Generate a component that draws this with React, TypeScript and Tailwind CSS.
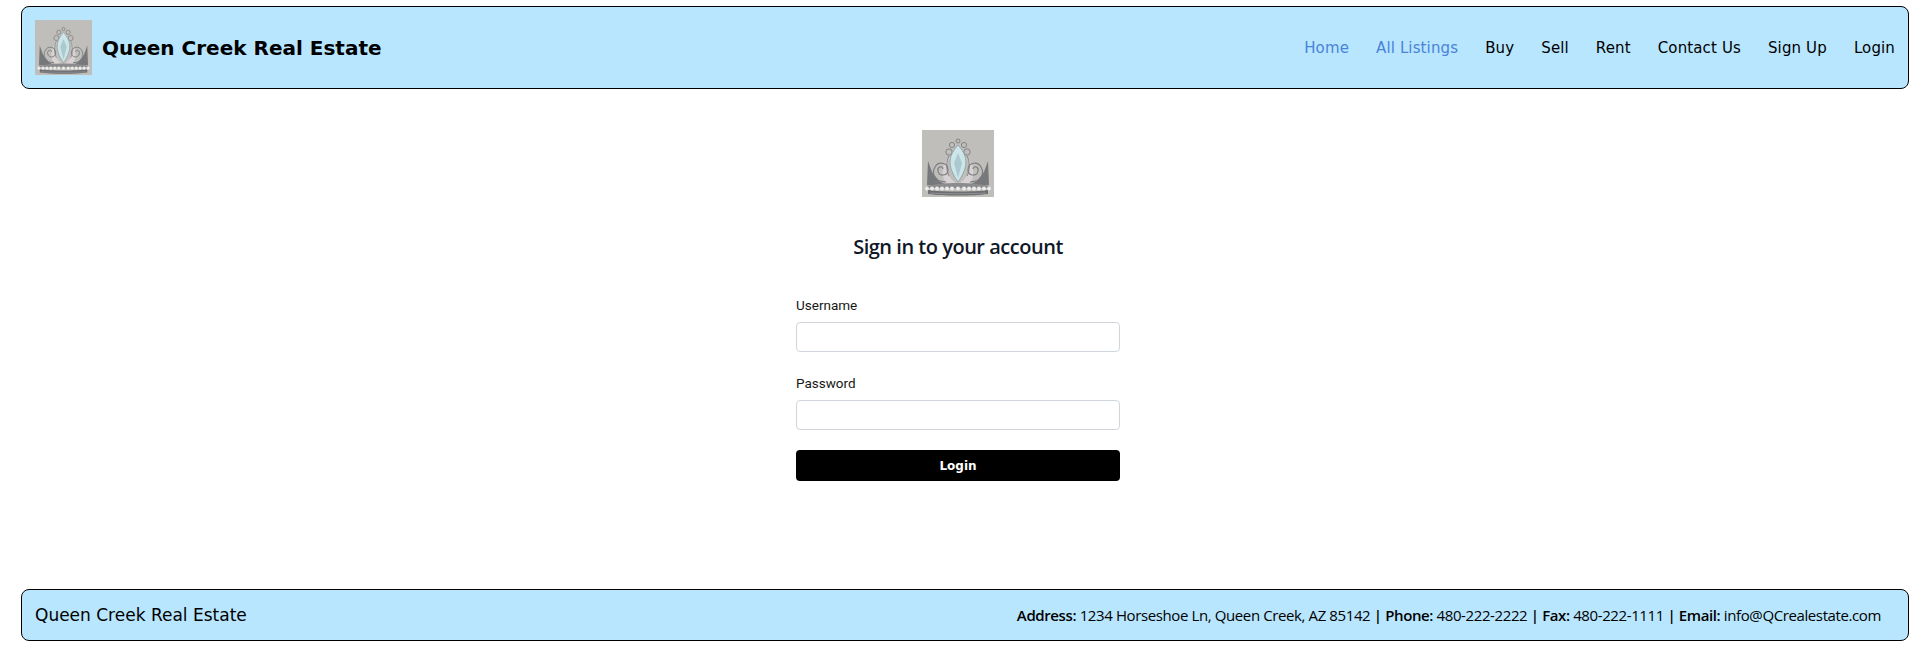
const navLinks = [
  { label: "Home", active: true },
  { label: "All Listings", active: true },
  { label: "Buy" },
  { label: "Sell" },
  { label: "Rent" },
  { label: "Contact Us" },
  { label: "Sign Up" },
  { label: "Login" },
]

const pearls = [5, 10, 15, 20, 25, 30, 36, 42, 47, 52, 57, 62, 67]

const Crown = ({ className }: { className: string }) => (
  <svg viewBox="0 0 72 67" preserveAspectRatio="none" className={className}>
    <rect width="72" height="67" fill="#bfbeba" />
    {/* side wings */}
    <path d="M6 31L10 42L17 51L24 55H5Z" fill="#77787b" />
    <path d="M66 31L62 42L55 51L48 55H67Z" fill="#77787b" />
    {/* pink lining */}
    <path d="M30 25C22 33 23 46 35 54L24 53C18 45 20 32 30 25Z" fill="#d8d2d4" />
    <path d="M42 25C50 33 49 46 37 54L48 53C54 45 52 32 42 25Z" fill="#d8d2d4" />
    {/* filigree */}
    <g fill="none" stroke="#7d7e81" strokeWidth="0.9">
      <circle cx="27" cy="22" r="3.2" />
      <circle cx="45" cy="22" r="3.2" />
      <circle cx="30" cy="15" r="2.6" />
      <circle cx="42" cy="15" r="2.6" />
      <circle cx="36" cy="11" r="2" />
      <path d="M24 52C13 52 9 44 13 37C16 31 26 32 26 40C26 46 17 47 16 41C15 37 20 35 21 39" strokeWidth="1.2" />
      <path d="M48 52C59 52 63 44 59 37C56 31 46 32 46 40C46 46 55 47 56 41C57 37 52 35 51 39" strokeWidth="1.2" />
      <path d="M27 26C24 32 24 40 27 46" />
      <path d="M45 26C48 32 48 40 45 46" />
    </g>
    {/* gem */}
    <path d="M36 15C45 25 48 35 36 52C24 35 27 25 36 15Z" fill="#cbe5e8" stroke="#84949a" strokeWidth="0.7" />
    <path d="M36 23L40 33L36 48L32 33Z" fill="#9dbec4" opacity="0.7" />
    {/* band */}
    <path d="M5 56C20 52 52 52 67 56V58H5Z" fill="#8b8c8e" />
    <path d="M6 60C20 62 52 62 66 60V64C50 66 22 66 6 64Z" fill="#6d6e71" />
    <path d="M8 63C22 64 50 64 64 63" fill="none" stroke="#a5a6a8" strokeWidth="0.6" />
    <g fill="#ececec">
      {pearls.map((cx) => (
        <circle key={cx} cx={cx} cy="58.5" r="2" />
      ))}
    </g>
  </svg>
)

export default function App() {
  return (
    <div className="flex flex-col h-[662px] bg-white pt-[6px] pl-[21px] pr-[9px] font-['DejaVu_Sans',sans-serif] text-black">
      <header className="flex justify-between items-center h-[83px] px-[13px] bg-sky-200 border border-black rounded-lg">
        <div className="flex items-center gap-[10px]">
          <Crown className="w-[57px] h-[55px]" />
          <span className="pt-[1px] text-[20px] font-bold">Queen Creek Real Estate</span>
        </div>
        <nav className="flex gap-[27px] pt-[2px] text-[15px] tracking-[0.13px]">
          {navLinks.map((link) => (
            <a key={link.label} href="#" className={link.active ? "text-[#4a83d8]" : ""}>
              {link.label}
            </a>
          ))}
        </nav>
      </header>

      <main className="flex flex-col items-center flex-1 pt-[41px] pr-[14px]">
        <Crown className="w-[72px] h-[67px]" />
        <h2 className="mt-[36px] text-[20px] leading-7 font-semibold tracking-[-0.48px] text-gray-900 font-['Open_Sans',sans-serif]">
          Sign in to your account
        </h2>
        <form className="flex flex-col w-[324px] mt-[34px] font-['Roboto',sans-serif]">
          <label className="text-[13.5px] leading-5 text-neutral-900">Username</label>
          <input className="h-[30px] mt-[7px] bg-white border border-gray-300 rounded-[4px]" />
          <label className="mt-[21px] text-[13.5px] leading-5 text-neutral-900">Password</label>
          <input className="h-[30px] mt-[7px] bg-white border border-gray-300 rounded-[4px]" />
          <button type="button" className="h-[31px] mt-[20px] bg-black text-white text-[12px] font-bold rounded-[4px] font-['DejaVu_Sans',sans-serif]">
            Login
          </button>
        </form>
      </main>

      <footer className="flex justify-between items-center h-[52px] mb-[21px] pl-[13px] pr-[27px] bg-sky-200 border border-black rounded-lg">
        <span className="pt-[2px] text-[17px]">Queen Creek Real Estate</span>
        <span className="text-[15px] tracking-[-0.39px] font-['Open_Sans',sans-serif]">
          <b className="font-semibold">Address:</b> 1234 Horseshoe Ln, Queen Creek, AZ 85142 <b className="font-semibold">| Phone:</b> 480-222-2222 <b className="font-semibold">| Fax:</b> 480-222-1111 <b className="font-semibold">| Email:</b> info@QCrealestate.com
        </span>
      </footer>
    </div>
  )
}
